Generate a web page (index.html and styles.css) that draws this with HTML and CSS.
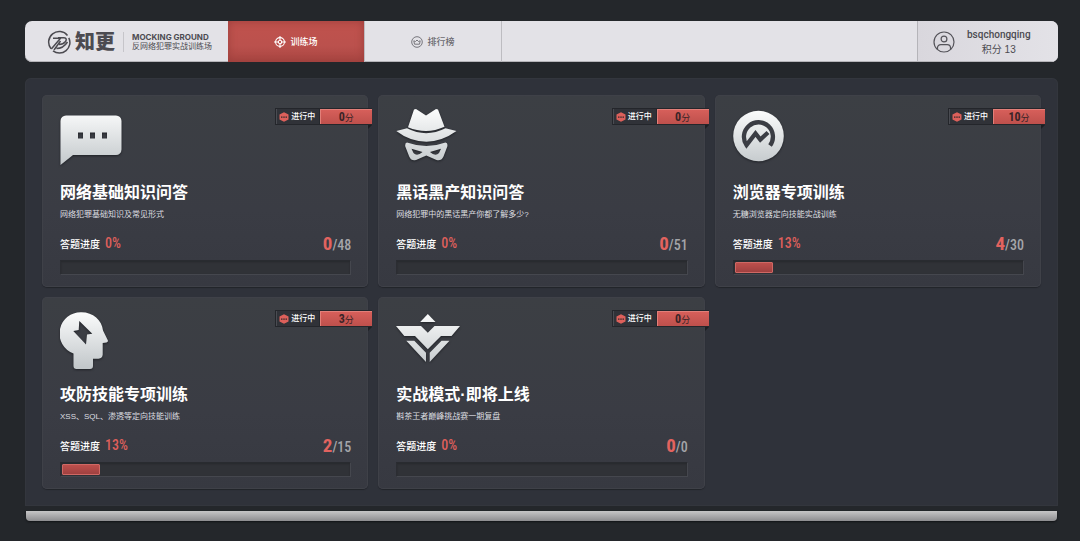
FILE: index.html
```html
<!DOCTYPE html>
<html lang="zh-CN">
<head>
  <meta charset="UTF-8">
  <meta name="viewport" content="width=device-width, initial-scale=1">
  <title>知更 - 反网络犯罪实战训练场</title>
  <link rel="stylesheet" href="styles.css">
</head>
<body>

<!-- shared shapes -->
<svg class="defs" width="0" height="0" aria-hidden="true">
  <defs>
    <linearGradient id="silver" gradientUnits="userSpaceOnUse" x1="0" y1="3" x2="0" y2="58">
      <stop offset="0" stop-color="#fbfcfc"/>
      <stop offset="1" stop-color="#c3c8cb"/>
    </linearGradient>
    <symbol id="hex" viewBox="0 0 10 10">
      <path d="M5 0.2 9.500 2.500V7.500L5 9.800 0.500 7.500V2.500Z" fill="#dd605b"/>
      <path d="M2 4.400h1.500v1.300H2zM4.250 4.400h1.500v1.300h-1.500zM6.500 4.400h1.500v1.300H6.500z" fill="#33282c"/>
    </symbol>
  </defs>
</svg>

<header class="header">
  <a class="brand" href="#">
    <svg class="brand-mark" viewBox="0 0 24 24" fill="none" stroke="#4c4b51" stroke-width="1.500">
      <path d="M4 18.800A10.500 10.500 0 0 1 20.500 5.500M21.800 7.800A10.500 10.500 0 0 1 6 20.800"/>
      <path d="M6 8.300H13.500L4.300 19M11 7.800h6c2.500 0 2.800 1.800 1.500 3.700-1.500 2-3.500 3-6.500 3M7 20l6.500-9M9.500 18.500c4.500 0 8-2 11-6.500"/>
    </svg>
    <span class="brand-name">知更</span>
    <span class="brand-sub">
      <strong>MOCKING GROUND</strong>
      <span>反网络犯罪实战训练场</span>
    </span>
  </a>
  <nav class="nav">
    <a class="nav-item active" href="#">
      <svg viewBox="0 0 12 12" fill="none" stroke="#fff" stroke-width="1.100">
        <circle cx="6" cy="6" r="4.400"/>
        <circle cx="6" cy="6" r="1.700"/>
        <path d="M6 0v4.500M6 7.500V12M0 6h4.500M7.500 6H12"/>
      </svg>
      训练场
    </a>
    <a class="nav-item" href="#">
      <svg viewBox="0 0 12 12" fill="none" stroke="#77767c" stroke-width="1">
        <circle cx="6" cy="6" r="5.300"/>
        <path d="M3.500 8.200 2.800 4.800 4.500 5.500 6 4l1.500 1.500 1.700-.7-.7 3.400z"/>
      </svg>
      排行榜
    </a>
  </nav>
  <a class="user" href="#">
    <svg viewBox="0 0 22 22" fill="none" stroke="#55545a" stroke-width="1.200">
      <circle cx="11" cy="11" r="10"/>
      <circle cx="11" cy="8" r="2.900"/>
      <path d="M4.500 18.200v-1.400c0-2 1.500-3.200 3.300-3.200h6.400c1.800 0 3.300 1.200 3.300 3.200v1.400"/>
    </svg>
    <span class="user-info">
      <strong>bsqchongqing</strong>
      <span>积分 13</span>
    </span>
  </a>
</header>

<main class="panel">
  <article class="card">
    <div class="badge">
      <span class="state"><svg><use href="#hex"/></svg>进行中</span>
      <span class="score"><b>0</b>分</span>
    </div>
    <svg class="icon" viewBox="0 0 66 62" fill="url(#silver)">
      <path fill-rule="evenodd" d="M6 8.500H56a5.500 5.500 0 0 1 5.500 5.500V42.500a5.500 5.500 0 0 1-5.500 5.500H13L.5 58V14A5.500 5.500 0 0 1 6 8.500ZM18 25.500v6h5v-6ZM30 25.500v6h5v-6ZM42 25.500v6h5v-6Z"/>
    </svg>
    <h2>网络基础知识问答</h2>
    <p class="desc">网络犯罪基础知识及常见形式</p>
    <div class="stats">
      <span class="label">答题进度</span><span class="percent">0%</span>
      <span class="count"><b>0</b>/48</span>
    </div>
    <div class="bar"></div>
  </article>

  <article class="card">
    <div class="badge">
      <span class="state"><svg><use href="#hex"/></svg>进行中</span>
      <span class="score"><b>0</b>分</span>
    </div>
    <svg class="icon" viewBox="0 0 66 62" fill="url(#silver)">
      <path d="M18 2.500 20 2 30 8.500 40 2l2 .5L48.500 19.800Q30.500 28 12 20.200Z"/>
      <path d="M.3 24 11 21.300Q30 31 49.500 21.300L60.500 24Q46 34.500 30.400 34.700 14 34.500.3 24Z"/>
      <path fill-rule="evenodd" d="M11 35.500Q30.500 42.500 49.500 35.500 52 36 51.300 39.500L47.500 49.500Q45 54.500 40.500 53L30.300 48.500 20 53Q15.500 54.500 13.200 49.500L9.300 39.500Q8.700 36 11 35.500ZM15.500 41.800 26.500 45Q21 50 17.500 46ZM45 41.800 34 45Q39.500 50 43 46Z"/>
    </svg>
    <h2>黑话黑产知识问答</h2>
    <p class="desc">网络犯罪中的黑话黑产你都了解多少?</p>
    <div class="stats">
      <span class="label">答题进度</span><span class="percent">0%</span>
      <span class="count"><b>0</b>/51</span>
    </div>
    <div class="bar"></div>
  </article>

  <article class="card">
    <div class="badge">
      <span class="state"><svg><use href="#hex"/></svg>进行中</span>
      <span class="score"><b>10</b>分</span>
    </div>
    <svg class="icon" viewBox="0 0 66 62">
      <circle cx="25.500" cy="29" r="25.300" fill="url(#silver)"/>
      <path d="M37 38.500A14.500 14.500 0 1 0 13.500 38L22.500 26.500 27.300 32.500 35 25.500" fill="none" stroke="#3b3d44" stroke-width="4.300"/>
    </svg>
    <h2>浏览器专项训练</h2>
    <p class="desc">无糖浏览器定向技能实战训练</p>
    <div class="stats">
      <span class="label">答题进度</span><span class="percent">13%</span>
      <span class="count"><b>4</b>/30</span>
    </div>
    <div class="bar"><div class="fill" style="width: 13.3%"></div></div>
  </article>

  <article class="card">
    <div class="badge">
      <span class="state"><svg><use href="#hex"/></svg>进行中</span>
      <span class="score"><b>3</b>分</span>
    </div>
    <svg class="icon" viewBox="0 0 66 62" fill="url(#silver)">
      <path fill-rule="evenodd" d="M21.500 3.200C33 3.200 42 11 43 21.500L47.800 31.200Q48.500 33 46.500 33.400L42.700 34V45.500Q42.500 49.500 38.500 49.700H33V57Q33 60 30 60H16.500Q13.500 60 13.500 57V44.500A21.300 21.300 0 0 1 21.500 3.200ZM19.300 12 18.700 21 13.300 22 26 35.500 27 25.500 32.300 24.800Z"/>
    </svg>
    <h2>攻防技能专项训练</h2>
    <p class="desc">XSS、SQL、渗透等定向技能训练</p>
    <div class="stats">
      <span class="label">答题进度</span><span class="percent">13%</span>
      <span class="count"><b>2</b>/15</span>
    </div>
    <div class="bar"><div class="fill" style="width: 13.3%"></div></div>
  </article>

  <article class="card">
    <div class="badge">
      <span class="state"><svg><use href="#hex"/></svg>进行中</span>
      <span class="score"><b>0</b>分</span>
    </div>
    <svg class="icon" viewBox="0 0 66 62" fill="url(#silver)">
      <path d="M31.800 5 39.500 13H24.200Z"/>
      <path d="M0 17H25L31.800 23.700 38.500 17H64L55.500 27H45L31.800 40.300 19 27H8.300Z"/>
      <path d="M10.300 31.700h8L30 43.700V53ZM53.500 31.700h-8L33.700 43.700V53Z"/>
    </svg>
    <h2>实战模式·即将上线</h2>
    <p class="desc">斟茶王者巅峰挑战赛一期复盘</p>
    <div class="stats">
      <span class="label">答题进度</span><span class="percent">0%</span>
      <span class="count"><b>0</b>/0</span>
    </div>
    <div class="bar"></div>
  </article>
</main>
<div class="ledge"></div>

</body>
</html>
```

FILE: styles.css
```css
* {
  box-sizing: border-box;
}
body {
  margin: 0;
  padding: 21px 22px 20px 25px;
  background: #24272b;
  color: #fff;
  font-family: "Liberation Sans", "Noto Sans CJK SC", sans-serif;
}
a {
  color: inherit;
  text-decoration: none;
}
.defs {
  position: absolute;
}

/* header */
.header {
  display: flex;
  height: 41px;
  border-radius: 7px;
  overflow: hidden;
  background: #e3e2e7;
  box-shadow: inset 0 -1px #b5b4b8;
  color: #4c4b51;
}
.brand {
  display: flex;
  align-items: center;
  width: 203px;
  padding-left: 22px;
}
.brand-mark {
  width: 24px;
  height: 24px;
}
.brand-name {
  margin-left: 4px;
  font-size: 20px;
  font-weight: 900;
  line-height: 24px;
}
.brand-sub {
  display: flex;
  flex-direction: column;
  margin-left: 8px;
  padding-left: 8px;
  border-left: 1px solid #c6c5ca;
  font-size: 8px;
  line-height: 10px;
  white-space: nowrap;
}
.brand-sub strong {
  font-family: Inter, sans-serif;
}
.nav {
  display: flex;
  flex: 1;
}
.nav-item {
  display: flex;
  align-items: center;
  justify-content: center;
  gap: 4px;
  width: 137px;
  border-right: 1px solid #bdbcc1;
  color: #6b6a70;
  font-size: 9px;
  font-weight: 500;
}
.nav-item svg {
  width: 12px;
  height: 12px;
}
.nav-item.active {
  background: linear-gradient(#c0524d, #bb514d 60%, #a94642);
  box-shadow: inset 0 0 8px #9c3e3b;
  color: #fff;
}
.user {
  display: flex;
  align-items: center;
  gap: 12px;
  width: 141px;
  padding-left: 15px;
  border-left: 1px solid #b5b4b9;
  background: linear-gradient(to right, #d9d7dd, #e3e2e7);
  box-shadow: inset 0 -1px #b5b4b8;
}
.user svg {
  width: 22px;
  height: 22px;
}
.user-info {
  display: flex;
  flex-direction: column;
  align-items: center;
  font-size: 10px;
  line-height: 15px;
}
.user-info strong {
  font-family: Roboto, sans-serif;
  font-weight: 500;
}

/* cards */
.panel {
  display: grid;
  grid-template-columns: repeat(3, 1fr);
  gap: 10px;
  margin-top: 16px;
  padding: 17px;
  border-radius: 6px 6px 0 0;
  background: #2f323a;
  box-shadow: inset 0 0 0 1px #33363d;
}
.card {
  position: relative;
  padding: 12px 17px 12px 18px;
  border-radius: 5px;
  background: linear-gradient(#3c3f44, #3a3c44 60%, #373941);
  box-shadow: inset 0 0 0 1px #3f4148, 0 1px 1px #22242a;
}
.badge {
  position: absolute;
  top: 13px;
  right: -4px;
  display: flex;
  height: 17px;
  border: 1px solid #24262b;
  border-right: 0;
  font-size: 8px;
  line-height: 15px;
}
.badge::after {
  content: "";
  position: absolute;
  top: 16px;
  right: 0;
  border-top: 4px solid #1d1f23;
  border-right: 4px solid transparent;
}
.state {
  display: flex;
  align-items: center;
  gap: 2px;
  width: 44px;
  padding-left: 2px;
  border-left: 1px solid #4a4c52;
  border-right: 1px solid #26282d;
  background: #303238;
  font-weight: 500;
}
.state svg {
  width: 10px;
  height: 10px;
}
.score {
  width: 52px;
  background: linear-gradient(#d8605b, #be504c);
  box-shadow: inset 1px 1px #e27f79;
  color: #3a2427;
  font-size: 9px;
  line-height: 17px;
  text-align: center;
}
.score b {
  font-family: "Roboto Condensed", Roboto, sans-serif;
  font-size: 12px;
}
.icon {
  display: block;
  width: 66px;
  height: 62px;
  filter: drop-shadow(0 1px 1px #202227);
}
.card h2 {
  margin: 12px 0 0;
  font-size: 16px;
  font-weight: bold;
  line-height: 24px;
}
.desc {
  margin: 4px 0 0;
  color: #dddee0;
  font-size: 8px;
  line-height: 12px;
}
.stats {
  display: flex;
  align-items: center;
  height: 24px;
  margin-top: 10px;
}
.label {
  font-size: 10px;
  font-weight: 500;
}
.percent,
.count {
  font-family: "Roboto Condensed", Roboto, sans-serif;
  font-weight: 500;
}
.percent {
  margin-left: 5px;
  color: #dd5f5b;
  font-size: 14px;
}
.count {
  margin-left: auto;
  color: #a4a5a9;
  font-size: 14px;
}
.count b {
  color: #e2635f;
  font-size: 19px;
}
.bar {
  height: 15px;
  margin-top: 5px;
  padding: 1px;
  border: 1px solid #45474e;
  border-top-color: #292b30;
  border-left-color: #2b2d32;
  background: #303237;
  box-shadow: inset 0 1px 2px #27292d;
}
.fill {
  height: 11px;
  border: 1px solid #cf6864;
  border-radius: 1px;
  background: linear-gradient(#bd4f4c, #a04140);
}

/* lower edge */
.ledge {
  height: 10px;
  margin: 5px 1px 0;
  border-radius: 0 0 4px 4px;
  background: linear-gradient(#c6c6c7, #8d8d90);
  box-shadow: 0 1px 2px #111316;
}
```
